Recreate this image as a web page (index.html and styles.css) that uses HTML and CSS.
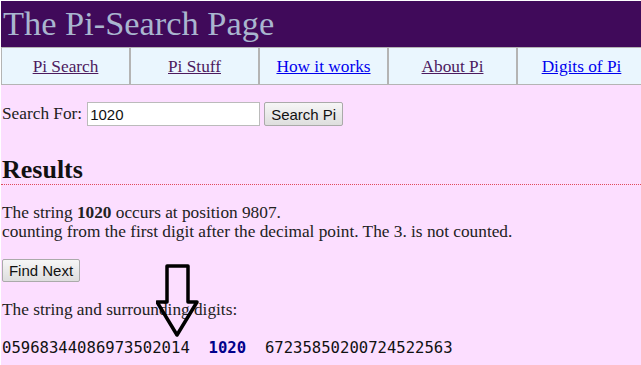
FILE: index.html
```html
<!DOCTYPE html>
<html lang="en">

<head>
	<meta charset="UTF-8">
	<title>The Pi-Search Page</title>
	<link rel="stylesheet" href="styles.css">
</head>

<body>
	<div class="header">The Pi-Search Page</div>
	<div class="nav">
		<a href="#" class="visited">Pi Search</a>
		<a href="#" class="visited">Pi Stuff</a>
		<a href="#">How it works</a>
		<a href="#" class="visited">About Pi</a>
		<a href="#">Digits of Pi</a>
	</div>

	<div class="page">
		<form class="search-form">
			<label for="query">Search For:</label>
			<input type="text" id="query" value="1020">
			<button type="button">Search Pi</button>
		</form>

		<h2>Results</h2>
		<p class="result-text">
			The string <b>1020</b> occurs at position 9807.<br>
			counting from the first digit after the decimal point. The 3. is not counted.
		</p>

		<button type="button" class="next-btn">Find Next</button>

		<p class="digits-label">The string and surrounding digits:</p>
		<pre class="digits">05968344086973502014  <b>1020</b>  67235850200724522563</pre>

		<svg class="arrow" width="44" height="74" viewBox="0 0 44 74">
			<path d="M11 2 H32 V38 H41 L21 71 L1 38 H11 Z" fill="none" stroke="#000" stroke-width="3.5"
				stroke-linejoin="round" />
		</svg>
	</div>
</body>

</html>
```

FILE: styles.css
```css
* {
	box-sizing: border-box;
}

html {
	background-color: #fff;
	overflow: hidden;
}

body {
	margin: 1px 0 0 1px;
	min-height: 364px;
	background-color: #fcdeff;
	font-family: 'Liberation Serif', serif;
	font-size: 17.3px;
	color: #222;
	position: relative;
}

.header {
	height: 46px;
	padding-left: 2px;
	background-color: #400a5a;
	color: #a9b6cf;
	font-size: 34.4px;
	line-height: 44px;
}

.nav {
	display: grid;
	grid-template-columns: repeat(5, 129px);
	width: 646px;
	height: 38px;
	background-color: #eaf6fe;
	border-top: 1px solid #b4b4b4;
	border-bottom: 1px solid #b4b4b4;
	border-left: 1px solid #b4b4b4;
}

.nav a {
	display: flex;
	justify-content: center;
	align-items: center;
	border-right: 2px solid #b4b4b4;
	color: #0000ee;
	padding-top: 1px;
}

.nav a.visited {
	color: #4d1a5e;
}

.page {
	padding-left: 1px;
}

.search-form {
	display: flex;
	align-items: center;
	margin: 17px 0 0;
}

.search-form label {
	margin-right: 5px;
}

.search-form input {
	width: 173px;
	height: 24px;
	padding: 0 2px;
	border: 1px solid #bbb;
	background: #fff;
	font-family: 'Liberation Sans', sans-serif;
	font-size: 15px;
	color: #111;
}

button {
	height: 24px;
	padding: 0 6px;
	border: 1px solid #aaa;
	border-radius: 2px;
	background: linear-gradient(#f6f6f6, #dedede);
	font-family: 'Liberation Sans', sans-serif;
	font-size: 15px;
	color: #111;
	white-space: nowrap;
}

.search-form button {
	width: 79px;
	margin-left: 4px;
	padding: 0;
}

h2 {
	margin: 30px 0 0 -1px;
	padding: 0 0 0 1px;
	font-size: 26px;
	line-height: 28px;
	color: #111;
	border-bottom: 1px dotted #e04a5c;
}

.result-text {
	margin: 18px 0 0;
	line-height: 19px;
}

.next-btn {
	display: block;
	width: 78px;
	height: 23px;
	margin-top: 18px;
	padding: 0;
}

.digits-label {
	margin: 18px 0 0;
	line-height: 19px;
}

.digits {
	margin: 20px 0 0;
	font-family: 'DejaVu Sans Mono', monospace;
	font-size: 15.6px;
	line-height: 19px;
	color: #111;
}

.digits b {
	color: #00008b;
}

.arrow {
	position: absolute;
	left: 155px;
	top: 263px;
}
```
